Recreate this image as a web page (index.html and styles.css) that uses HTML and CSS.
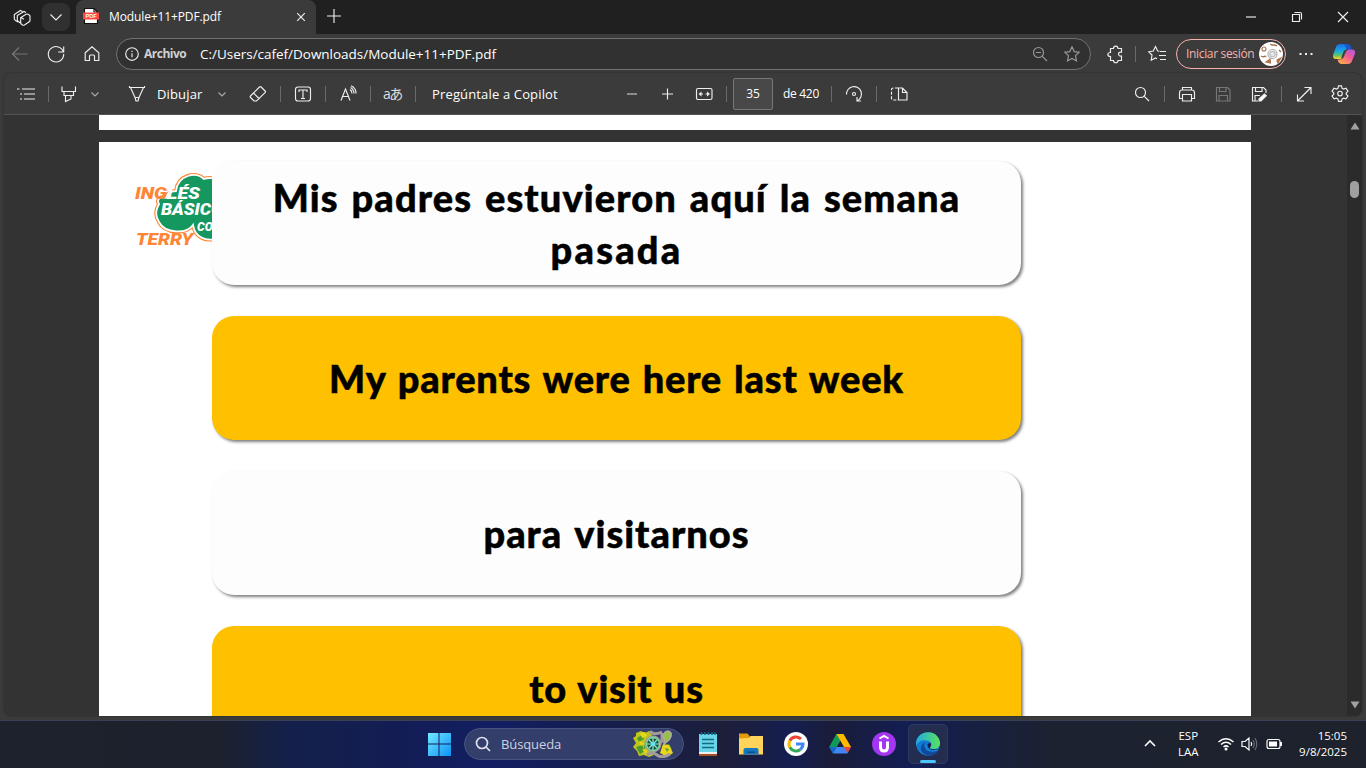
FILE: index.html
```html
<!DOCTYPE html>
<html lang="es">
<head>
<meta charset="utf-8">
<title>Module+11+PDF.pdf</title>
<link rel="stylesheet" href="styles.css">
</head>
<body>
<div class="screen">
  <header class="tabstrip">
    <svg class="workspaces" viewBox="0 0 18 18"><path d="M5 14 2.500 12.500Q1 11.500 1.300 10V6.500L7.500 2.500l2 1M7.500 15 5.300 13.500Q4 12.500 4.300 11V7.500L11 3.500l2 1M8 9.500l5-3.200q1-.6 2 0l1.200.8q.8.500.8 1.500v3.600q0 1-.8 1.500L11.500 17q-1 .5-2 0l-1-.8q-.8-.5-.8-1.500V9.500zM8 9.500l3 1.700"/></svg>
    <button class="tabmenu"><svg viewBox="0 0 14 14"><path d="M1.500 4.500 7 10l5.500-5.500"/></svg></button>
    <div class="tab">
      <svg class="pdf" viewBox="0 0 16 16"><path class="sheet" d="M1.500.5H11l3.500 3.500v11.500h-13z"/><path d="M11 0v4h4" stroke="#111"/><path fill="#f44" stroke="none" d="M0 4.500h16v7H0z"/><text x="8" y="10.300">PDF</text></svg>
      <span class="tabtitle">Module+11+PDF.pdf</span>
      <svg class="close" viewBox="0 0 10 10"><path d="m1.200 1.200 7.600 7.600m0-7.600-7.600 7.600"/></svg>
    </div>
    <svg class="newtab" viewBox="0 0 14 14"><path d="M7 0v14M0 7h14"/></svg>
    <div class="winbtns">
      <svg viewBox="0 0 12 12"><path d="M1 6h10"/></svg>
      <svg viewBox="0 0 12 12"><path d="M1.500 3.500h7v7h-7zM3.500 1.500h5.500q1.500 0 1.500 1.500v5.500"/></svg>
      <svg viewBox="0 0 12 12"><path d="m1 1 10 10m0-10L1 11"/></svg>
    </div>
  </header>

  <nav class="navbar">
    <svg class="ic dim" viewBox="0 0 20 20"><path d="M17.500 10h-15M9 3.500 2.500 10 9 16.500"/></svg>
    <svg class="ic" viewBox="0 0 20 20"><path d="M17.500 8.500A7.700 7.700 0 1 0 17.700 10M17.700 2.500v5.500h-5.500"/></svg>
    <svg class="ic" viewBox="0 0 20 20"><path d="M3.200 8.800 10 2.800l6.800 6v7.700h-4.300v-4.500q0-1-1-1h-3q-1 0-1 1v4.500H3.200z"/></svg>
    <div class="address">
      <svg class="info" viewBox="0 0 14 14"><circle cx="7" cy="7" r="6.300"/><path d="M7 6.200v4M7 3.700v1.200"/></svg>
      <b>Archivo</b>
      <span class="url">C:/Users/cafef/Downloads/Module+11+PDF.pdf</span>
      <svg class="sm" viewBox="0 0 16 16"><circle cx="6.500" cy="6.500" r="5"/><path d="m10.300 10.300 4.700 4.700M4 6.500h5"/></svg>
      <svg class="sm" viewBox="0 0 16 16"><path d="m8 .8 2.200 4.800 5 .6-3.700 3.500 1 5.200L8 12.400l-4.500 2.500 1-5.200L.8 6.200l5-.6z"/></svg>
    </div>
    <svg class="ic" viewBox="0 0 20 20"><path d="M5.500 4.500h3C8.500 1.300 13 1.300 13 4.500h3.500v3.700c-4-.8-4 4.600 0 3.800v4.500H13c0 3-4.500 3-4.500 0h-3v-4C2 12.500 2 8.500 5.500 8.500z"/></svg>
    <i class="sep"></i>
    <svg class="ic" viewBox="0 0 20 20"><path d="M12.500 7.300 10.700 7 8.500 2.500 6.300 7l-4.500.8 3.200 3.200-.8 5.300L8.500 14l1.500.7M13 7.500h6M12 11.500h7M13 15.500h6"/></svg>
    <div class="signin"><span>Iniciar sesión</span>
      <svg viewBox="0 0 24 24"><circle cx="12" cy="12" r="12" fill="#fff" stroke="none"/><g stroke="#a87454"><circle cx="13.500" cy="12" r="4.500" stroke="#aaa"/><circle cx="13.500" cy="12" r="2.700" stroke="#bbb" fill="#e8e8e8"/><circle cx="5" cy="7" r="2"/><path d="M11 2c3 2 5 0 7 2M2 14c3 2 4-1 5 1M20 8l2 2M18 20l2-3" stroke-width="1.500"/><path d="m7 20 4-3 .5 4zM18 18l4-2-3 5z" fill="#c77b42"/></g></svg>
    </div>
    <svg class="ic dots" viewBox="0 0 20 20"><path d="M3.500 10h2M9 10h2m3.500 0h2"/></svg>
    <svg class="copilot" viewBox="0 0 24 24">
      <defs><linearGradient id="cpa" x2="0" y2="1"><stop stop-color="#1b6ce5"/><stop offset=".45" stop-color="#16a8e8"/><stop offset=".75" stop-color="#5ac46a"/><stop offset="1" stop-color="#ffd02c"/></linearGradient><linearGradient id="cpb" x1="1" x2=".3" y2="1"><stop stop-color="#a65bea"/><stop offset=".5" stop-color="#f4589b"/><stop offset="1" stop-color="#ffa650"/></linearGradient></defs>
      <path fill="url(#cpa)" stroke="none" d="M8 2h6q2 0 1.500 2.500L12 14q-1 3-3.500 3H3.500Q.5 17 1 13L4 5q1-3 4-3z"/>
      <path fill="#1858ce" stroke="none" d="M12 2h4q2 0 3 3l.8 2.500H16q-1.500 0-2-2z"/>
      <path fill="url(#cpb)" stroke="none" d="M16.500 7.500H20q3.500 0 3 4l-3 7.500q-1 3-4 3H9q-2 0-3-3l-.5-1.500H8q3 0 4-3L14 10q.8-2.500 2.500-2.500z"/>
      <path fill="#3b3b3b" stroke="none" d="m12 8.500 2.200-.8-3 8-2.200.8z"/>
    </svg>
  </nav>

  <section class="viewer">
    <div class="pdfbar">
      <svg class="ic" viewBox="0 0 18 18"><path d="M5 4h13M7 9h11M7 14h11M0 4h2.500M3 9h2M3 14h2"/></svg>
      <i class="sep"></i>
      <svg class="ic" viewBox="0 0 18 18"><path d="M2 1.500v5h13.500v-5M4 6.500v4h9.500v-4M5.500 10.500v6l5.500-2.500v-3.500"/></svg>
      <svg class="chev" viewBox="0 0 10 10"><path d="M1.500 3.500 5 7l3.500-3.500"/></svg>
      <svg class="ic" viewBox="0 0 18 18"><path d="M1.500 1v1.500h15V1M2.500 2.500 7 12.500h4L15.500 2.500M7 12.500l1 3.500h2l1-3.500"/></svg>
      <span class="lab draw">Dibujar</span>
      <svg class="chev" viewBox="0 0 10 10"><path d="M1.500 3.500 5 7l3.500-3.500"/></svg>
      <svg class="ic" viewBox="0 0 18 18"><path d="M1.500 11 10.500 2q.8-.8 1.600 0l4 4q.8.800 0 1.600L7.500 16H5l-3.500-3.500q-.8-.8 0-1.500zM4.500 8l6 6"/></svg>
      <i class="sep"></i>
      <svg class="ic" viewBox="0 0 18 18"><rect x="1.500" y="2" width="15" height="14" rx="2.500"/><path d="M5 7V5h8v2M9 5v8.500M7 13.500h4"/></svg>
      <i class="sep"></i>
      <svg class="ic" viewBox="0 0 18 18"><path d="M2 15.500 6.500 4 11 15.500M3.500 11.500h6M11 4.500q2 1.300 2 4M11.500 2.500q3.500 2 3.500 6M12 .8q5 2 5 7.700"/></svg>
      <i class="sep"></i>
      <span class="translate">aあ</span>
      <i class="sep"></i>
      <span class="lab ask">Pregúntale a Copilot</span>
      <svg class="ic minus" viewBox="0 0 18 18"><path d="M4 9h10"/></svg>
      <svg class="ic" viewBox="0 0 18 18"><path d="M9.500 3.500v11M4 9h11"/></svg>
      <svg class="ic" viewBox="0 0 18 18"><rect x="1.500" y="3.500" width="15.500" height="11" rx="1.500"/><path fill="#eee" stroke="none" d="m6.500 6.500-3 2.500 3 2.500zm5.500 0 3 2.500-3 2.500z"/><path d="M5 9h3m2.500 0h3"/></svg>
      <i class="sep"></i>
      <span class="pageno">35</span>
      <span class="lab of">de 420</span>
      <i class="sep"></i>
      <svg class="ic" viewBox="0 0 18 18"><circle cx="9" cy="9" r="1.500"/><path d="M1.500 9.500a7.500 7.500 0 1 1 11 6.200M12 12v4h4"/></svg>
      <i class="sep"></i>
      <svg class="ic" viewBox="0 0 18 18"><path stroke-dasharray="3 1.500" d="M8 3H3.500Q1.500 3 1.500 5v8q0 2 2 2H8"/><path d="M8.500 3h4L17 7.500V15H8.500zM12.500 3v4.500H17"/></svg>
      <svg class="ic" viewBox="0 0 18 18"><circle cx="7.500" cy="7.500" r="5"/><path d="m11.300 11.300 4.700 4.700"/></svg>
      <i class="sep"></i>
      <svg class="ic" viewBox="0 0 18 18"><path d="M4.500 5V2.500h9V5M4 13.500H1.500V8q0-3 2.500-3h10q2.500 0 2.500 3v5.500H14M4.500 9.500h9V16h-9z"/></svg>
      <svg class="ic dim" viewBox="0 0 18 18"><path d="M2.500 2.500h11l2.500 2.500v11H2.500zM5.500 2.500v4H12v-4M5 16v-5.500h8.500V16"/></svg>
      <svg class="ic" viewBox="0 0 18 18"><path d="M8 16H2.500V2.500h11L16 5v3M5.500 2.500v4H12v-4M5 16v-5.500h5"/><path fill="#fff" d="m9 14 5.500-5 1.800 1.800L11 16H9z"/></svg>
      <i class="sep"></i>
      <svg class="ic" viewBox="0 0 18 18"><path d="M3 15.500 15.500 3M9.500 2.500H16V9M2.500 9.500V16H9"/></svg>
      <svg class="ic" viewBox="0 0 18 18"><circle cx="9" cy="8.500" r="2.300"/><path d="M7.500.8h3l.6 2.500 1.500.8L15 3.300 17 6.200 15.200 8v1.200L17 11l-2 2.900-2.400-.8-1.500.8-.6 2.500h-3l-.6-2.500-1.500-.8-2.400.8L1 11l1.800-1.800V8L1 6.200l2-2.900 2.400.8 1.500-.8z"/></svg>
    </div>

    <div class="canvas">
      <main class="pages">
        <div class="prevpage"></div>
        <article class="page">
          <svg class="logo" viewBox="0 0 77 78">
            <path id="cloud" d="M24 32C21 27 26 24 32 26 31 22 35 19 41 19 43 3 61-1 69 7q5-2 12 0v60c-10 2-21-1-23-14C52 62 30 62 24 50c-4-6-3-13 0-18z" fill="#fff" stroke="#ff8434" stroke-width="4"/>
            <path d="M24 32C21 27 26 24 32 26 31 22 35 19 41 19 43 3 61-1 69 7q5-2 12 0v60c-10 2-21-1-23-14C52 62 30 62 24 50c-4-6-3-13 0-18z" fill="#159760" stroke="#fff" stroke-width="1.800"/>
            <g class="brand"><text x="0" y="27" textLength="65" lengthAdjust="spacingAndGlyphs"><tspan fill="#ff8434">ING</tspan>LÉS</text><text x="26" y="43" textLength="62" lengthAdjust="spacingAndGlyphs">BÁSICO</text><text x="62" y="59" class="con">CON</text><text x="1" y="73" class="terry" textLength="57" lengthAdjust="spacingAndGlyphs">TERRY</text></g>
          </svg>
          <div class="cards">
            <p class="card white"><span class="l1">Mis padres estuvieron aquí la semana</span><span class="l2">pasada</span></p>
            <p class="card gold"><span class="l3">My parents were here last week</span></p>
            <p class="card white"><span class="l4">para visitarnos</span></p>
            <p class="card gold"><span class="l5">to visit us</span></p>
          </div>
        </article>
      </main>
      <div class="scroll">
        <svg viewBox="0 0 10 8"><path d="M5 .5 9.500 7.500h-9z"/></svg>
        <i class="thumb"></i>
        <svg class="down" viewBox="0 0 10 8"><path d="M5 7.500.5.500h9z"/></svg>
      </div>
    </div>
  </section>

  <footer class="taskbar">
    <svg class="start" viewBox="0 0 24 24"><defs><linearGradient id="win" x2="1" y2="1"><stop stop-color="#72eaff"/><stop offset="1" stop-color="#0b91f5"/></linearGradient></defs><path fill="url(#win)" d="M1 1h10.500v10.500H1zm11.500 0H24v10.500H12.500zM1 12.500h10.500V24H1zm11.500 0H24V24H12.500z"/></svg>
    <div class="search">
      <svg class="lens" viewBox="0 0 16 16"><circle cx="7" cy="7" r="5.500"/><path d="m11 11 4 4"/></svg>
      <span>Búsqueda</span>
      <svg class="garden" viewBox="0 0 42 28">
        <path fill="#bfc61a" d="M4 3 9 1l4 2 4-2 3 4-2 9 4 11-5 2-5-2-5 1-2-5-4-4 3-4-3-5 3-2z"/><path fill="#4a9a2e" d="m5 8 5-3 2 4-5 3zM4 17l6-2 3 6-5 3zM30 17l7-3 3 5-6 4z"/><path fill="#e9d51d" d="m8 3 5-1 2 4-5 2zM7 11l5 2-3 3zM10 19l5 1-1 5zM31 14l6 1 4 8-6 4-7-4z"/><path fill="#5b9f2c" d="m33 18 4 1-2 3zM12 15l3 2-3 2z"/>
        <path stroke="#a69b9b" stroke-width="3" fill="none" d="M18 1q3 5 12 1M15 25q5-4 10 0t13-1M30 3v8l-3 3"/><path fill="#8fc43f" stroke="#b4a9a5" stroke-width="1.500" d="M32 9q-2-7 4-8 6 2 1 9l-5 4z"/>
        <circle cx="21" cy="14" r="8.500" fill="#a39d98"/><circle cx="21" cy="14" r="6.500" fill="#234d45" stroke="#72dda7" stroke-width="1.300"/><path stroke="#8cf0d0" d="M21 8v12M15 14h12M17 10l8 8m0-8-8 8"/><circle cx="21" cy="14" r="2" fill="#63dff0"/>
      </svg>
    </div>
    <svg class="app" viewBox="0 0 24 24"><path fill="#69d5e9" d="M3 2h18v18H3z"/><path fill="#eee" d="M3 20h18v2H3z"/><path fill="#a24f28" d="M3 22h18v2H3z"/><path stroke="#126b85" stroke-width="1.500" d="M6 7.500h12M6 11.500h12M6 15.500h12M5.500 0v3M9 0v3m3.500-3v3M16 0v3m3-3v3"/></svg>
    <svg class="app" viewBox="0 0 24 24"><path fill="#e59b08" d="M0 1.500h8.500l2 2.500v5H0z"/><path fill="#ffd45b" d="M0 6.500 9.500 6l2-2H24v18.500H0z"/><path fill="#1577bd" d="M4.500 22.500V18q0-2 2-2h11q2 0 2 2v4.500z"/><path fill="#0a4f8d" d="M8 19.500h8v1.500H8z"/></svg>
    <svg class="app" viewBox="0 0 24 24"><circle cx="12" cy="12" r="12" fill="#fff"/><g fill="none" stroke-width="3"><path stroke="#ea4335" d="M17 7A7 7 0 0 0 5.800 8.700"/><path stroke="#fbbc05" d="M5.800 8.700a7 7 0 0 0 0 6.600"/><path stroke="#34a853" d="M5.800 15.300A7 7 0 0 0 16.300 17.500"/><path stroke="#4285f4" d="M16.300 17.500A7 7 0 0 0 19 12h-7"/></g></svg>
    <svg class="app" viewBox="0 0 24 24"><path fill="#109a58" d="M8.300 2h3.900l2 3.500L5 21.500 1.200 15z"/><path fill="#ffba00" d="M8.500 2h7l7.500 13h-7z"/><path fill="#4285f4" d="M8.500 15H23l-3.800 6.500H5z"/><path fill="#1967d2" d="M1.200 15h7.300L5 21.500z"/><path fill="#ea4335" d="M16 15h7l-3.500 6z"/></svg>
    <svg class="app" viewBox="0 0 24 24"><circle cx="12" cy="12" r="12" fill="#a435f0"/><path fill="none" stroke="#fff" stroke-width="3" d="M8.500 9.500V15q0 4 3.500 4t3.500-4V9.500"/><path fill="none" stroke="#fff" stroke-width="2" d="M7.500 6.500 12 4l4.500 2.500"/></svg>
    <div class="edge"><svg class="app" viewBox="0 0 24 24"><defs><linearGradient id="e1" x2="1"><stop stop-color="#22a9e7"/><stop offset="1" stop-color="#5ae35a"/></linearGradient><linearGradient id="e2" x2="1" y2="1"><stop stop-color="#0d70ce"/><stop offset="1" stop-color="#1487d8"/></linearGradient></defs><circle cx="12" cy="12" r="11.800" fill="url(#e2)"/><path fill="#12499b" d="M8 12q0 10 14 7-4 6-11 4.500C2 20 4 12 10 10z"/><path fill="#15214c" d="M11.500 12q-.5 5 5.500 6 4 .5 6-1.500-5 2.500-8.500-2 1-2 0-4z"/><path fill="url(#e1)" d="M0 11C1-2 21-4 24 10q.5 6-5 7-5 .5-5-1.500c3-3 1-7-4-7Q3 7.500 0 14z"/></svg><i></i></div>
    <svg class="tray" viewBox="0 0 18 18"><path stroke-width="1.600" d="m4 11 5-5 5 5"/></svg>
    <div class="lang">ESP<br>LAA</div>
    <svg class="tray" viewBox="0 0 18 18"><path d="M1.500 7q7.500-6.500 15 0M4 9.500q5-4.500 10 0M6.500 12q2.500-2.200 5 0" stroke-width="1.500"/><circle cx="9" cy="14" r="1.500" fill="#fff" stroke="none"/></svg>
    <svg class="tray" viewBox="0 0 18 18"><path d="M2 6.500h3L9 3v12l-4-3.500H2zM11 7q1.500 2 0 4"/><path stroke="#666c78" d="M13 5q2.500 4 0 8M15 3q3.500 6 0 12"/></svg>
    <svg class="tray" viewBox="0 0 18 18"><rect x="2" y="4.500" width="13" height="9" rx="2"/><path fill="#fff" stroke="none" d="M4 6.500h8v5H4zM15 7h2v4h-2z"/></svg>
    <div class="clock">15:05<br>9/8/2025</div>
  </footer>
</div>
</body>
</html>
```
FILE: styles.css
```css
* { box-sizing: border-box; }
body { margin: 0; font-family: "Open Sans", "Noto Sans", sans-serif; color: #fff; }
svg { display: block; fill: none; stroke: #eee; stroke-width: 1.150; flex: none; }
i { display: block; }
.screen { width: 1366px; height: 768px; overflow: hidden; display: flex; flex-direction: column; background: #3b3b3b; }

.tabstrip { height: 34px; flex: none; background: #202020; display: flex; align-items: center; }
.workspaces { width: 18px; height: 18px; margin-left: 13px; }
.tabmenu { width: 28px; height: 28px; margin-left: 11px; padding: 0; border: 0; border-radius: 8px; background: #303030; display: grid; place-items: center; }
.tabmenu svg { width: 14px; height: 14px; }
.tab { width: 240px; height: 34px; margin-left: 6px; padding: 0 10px 2px 7px; background: #3b3b3b; border-radius: 8px 8px 0 0; display: flex; align-items: center; }
.pdf { width: 16px; height: 16px; }
.pdf .sheet { fill: #fff; stroke: #111; }
.pdf text { fill: #fff; stroke: none; font: bold 5.500px "Liberation Sans", sans-serif; text-anchor: middle; }
.tabtitle { margin-left: 10px; font-size: 12px; letter-spacing: -.12px; flex: 1; }
.close { width: 10px; height: 10px; margin-top: 2px; }
.newtab { width: 14px; height: 14px; margin: 0 0 2px 11px; }
.winbtns { margin-left: auto; padding-right: 17px; display: flex; gap: 34px; }
.winbtns svg { width: 12px; height: 12px; }

.navbar { height: 39px; flex: none; padding-left: 10px; display: grid; align-items: center; justify-items: start;
  grid-template-columns: 36px 36px 34px 989px 30px 12px 29px 120px 36px 1fr; }
.navbar .ic { width: 20px; height: 20px; }
.dim { stroke: #777; }
.sep { width: 1px; height: 16px; background: #6a6a6a; }
.address { width: 975px; height: 32px; border: 1px solid #727272; border-radius: 16px; background: #313131; display: flex; align-items: center; padding: 0 10px 0 8px; font-size: 13.500px; }
.info { width: 14px; height: 14px; }
.address b { width: 42px; margin-left: 5px; font-size: 12px; font-weight: 700; letter-spacing: -.5px; color: #d0d0d0; }
.url { margin-left: 14px; flex: 1; white-space: nowrap; letter-spacing: -.02px; }
.sm { width: 16px; height: 16px; margin-left: 16px; stroke: #999; }
.signin { width: 110px; height: 30px; border: 1px solid #f5b2ac; border-radius: 15px; display: flex; align-items: center; justify-content: space-between; padding: 0 2px 0 9px; color: #f5b2ac; font-size: 12px; letter-spacing: -.33px; white-space: nowrap; }
.signin svg { width: 24px; height: 24px; }
.dots { stroke-width: 2; }
.copilot { width: 24px; height: 24px; }

.viewer { margin: 0 4px 4px; height: 643px; flex: none; border-radius: 8px; overflow: hidden; background: #333; box-shadow: 0 0 2px #222; }
.pdfbar { height: 42px; background: #3b3b3b; border-bottom: 1px solid #535353; padding-left: 13px; display: grid; align-items: center; justify-items: start; white-space: nowrap;
  grid-template-columns: 31px 12px 30px 38px 29px 60px 32px 31px 14px 31px 14px 31px 13px 32px 17px 191px 35px 37px 31px 7px 50px 48px 14px 31px 14px 243px 31px 14px 36px 36px 31px 14px 36px 1fr; }
.pdfbar .ic { width: 18px; height: 18px; }
.chev { width: 10px; height: 10px; stroke: #aaa; }
.lab { font-size: 13px; letter-spacing: .15px; }
.minus { stroke: #aaa; stroke-width: 1.700; }
.of { font-size: 12px; letter-spacing: -.3px; }
.pageno { width: 40px; height: 32px; border: 1px solid #777; border-radius: 2px; background: #484848; font-size: 12px; line-height: 30px; text-align: center; }
.translate { font: 14px "Open Sans", "Noto Sans CJK JP", sans-serif; letter-spacing: -1.500px; line-height: 18px; color: #ddd; }

.canvas { height: 601px; display: flex; }
.pages { margin-left: 95px; width: 1152px; display: flex; flex-direction: column; gap: 12px; }
.prevpage { height: 15px; flex: none; background: #fff; }
.page { flex: 1; min-height: 0; overflow: hidden; background: #fff; padding: 19px 0 0 36px; display: flex; align-items: flex-start; }
.logo { width: 77px; height: 78px; margin-top: 11px; stroke: none; overflow: hidden; }
.brand { font: italic 900 17px Roboto, sans-serif; fill: #fff; }
.con { font-size: 12px; }
.terry { font-size: 16px; fill: #ff8434; }
.cards { width: 809px; display: flex; flex-direction: column; gap: 31px; }
.card { margin: 0; height: 124px; flex: none; border-radius: 22px; display: flex; flex-direction: column; align-items: center; justify-content: center; color: #000; font: 900 38px/52px Lato, sans-serif; white-space: nowrap; -webkit-text-stroke: .5px #000; box-shadow: 2px 2px 3px rgba(0,0,0,.5); }
.l1 { letter-spacing: 1.100px; word-spacing: 2.800px; }
.l2 { letter-spacing: 2.200px; }
.l3 { letter-spacing: .8px; word-spacing: 2.200px; }
.l4 { letter-spacing: 1px; word-spacing: 3px; }
.l5 { letter-spacing: .8px; word-spacing: 1.500px; }
.white { background: #fdfdfd; }
.gold { background: #ffc000; }
.scroll { width: 15px; margin-left: auto; background: #2b2b2b; display: flex; flex-direction: column; align-items: center; padding: 7px 0; }
.scroll svg { width: 10px; height: 8px; fill: #a0a0a0; stroke: none; }
.thumb { width: 9px; height: 17px; margin-top: 51px; border-radius: 5px; background: #a0a0a0; }
.scroll .down { margin-top: auto; }

.taskbar { height: 48px; flex: none; padding-left: 427px; display: grid; align-items: center; justify-items: start; box-shadow: inset 0 1px #3a4055;
  grid-template-columns: 37px 232px 43px 45px 44px 44px 36px 233px 37px 39px 23px 25px 25px 57px;
  background: linear-gradient(90deg, #1d222c, #1c212d 16%, #14204a 21%, #131d54 29%, #121e62 36%, #141e50 43%, #1c1e3a 53%, #151e50 58%, #1a1c38 61%, #121e56 67%, #171f42 71%, #1c2230 77%, #1d222c); }
.taskbar svg { stroke: none; }
.start, .app { width: 24px; height: 24px; }
.search { width: 220px; height: 32px; border: 1px solid #4a5380; border-radius: 16px; background: #333e6a; display: flex; align-items: center; padding: 0 9px 0 10px; font-size: 13px; letter-spacing: -.1px; color: #ced2e0; }
.taskbar .lens { width: 16px; height: 16px; stroke: #dfe2ee; stroke-width: 1.700; }
.search span { margin-left: 10px; flex: 1; }
.garden { width: 42px; height: 28px; }
.edge { width: 40px; height: 40px; border: 1px solid #303a60; border-radius: 5px; background: #222d50; display: flex; flex-direction: column; align-items: center; padding-top: 7px; gap: 4px; }
.edge i { width: 16px; height: 3px; border-radius: 2px; background: #4cc2ff; }
.taskbar .tray { width: 18px; height: 18px; stroke: #fff; }
.lang, .clock { font-size: 11.500px; line-height: 16px; text-align: center; }
.clock { text-align: right; justify-self: end; }
```
